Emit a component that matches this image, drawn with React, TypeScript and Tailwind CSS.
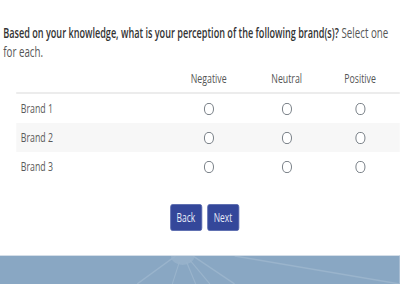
import React from "react";

const brands = ["Brand 1", "Brand 2", "Brand 3"];
const options = ["Negative", "Neutral", "Positive"];

const Radio = () => (
  <span className="block w-[15px] h-[12px] rounded-full border-[1.5px] border-[#5f6770] bg-white" />
);

const FooterArt = () => (
  <svg className="absolute inset-0 w-full h-full" viewBox="0 0 615 28" preserveAspectRatio="none">
    <ellipse cx="281" cy="0" rx="18" ry="9" fill="#96b1ca" />
    <g stroke="#9ab4cc" strokeWidth="1.5">
      <line x1="270" y1="0" x2="211" y2="28" />
      <line x1="276" y1="6" x2="265" y2="28" />
      <line x1="287" y1="6" x2="301" y2="28" />
      <line x1="292" y1="4" x2="323" y2="28" />
      <line x1="297" y1="0" x2="361" y2="28" />
      <line x1="361" y1="0" x2="615" y2="28" />
    </g>
  </svg>
);

export default function App() {
  return (
    <div className="w-[400px] h-[284px] overflow-hidden bg-white" style={{ fontFamily: '"Open Sans", "Noto Sans", sans-serif' }}>
      <div className="w-[615px] h-[284px] origin-top-left scale-x-65 flex flex-col">
        {/* Question */}
        <p className="pt-[23px] pl-[5px] pr-[2px] leading-[18px] text-[#333]">
          <span className="font-semibold text-[14px]">
            Based on your knowledge, what is your perception of the following brand(s)?
          </span>{" "}
          <span className="text-[#555] text-[15px]">Select one for each.</span>
        </p>

        {/* Grid */}
        <div className="ml-[25px] mt-[4px] text-[13.5px] text-[#555]">
          <div className="grid grid-cols-[236px_120px_120px_106px] h-[30px] items-center border-b-2 border-[#ececec]">
            <span />
            {options.map((o) => (
              <span key={o} className="text-center">{o}</span>
            ))}
          </div>
          {brands.map((b, i) => (
            <div
              key={b}
              className={`grid grid-cols-[236px_120px_120px_106px] h-[29px] items-center ${
                i === 1 ? "bg-[#f7f7f7]" : "bg-white"
              }`}
            >
              <span className="pl-[7px] text-[#5a5a5a]">{b}</span>
              {options.map((o) => (
                <span key={o} className="flex justify-center">
                  <Radio />
                </span>
              ))}
            </div>
          ))}
        </div>

        {/* Nav buttons */}
        <div className="flex justify-center gap-[8px] pl-[14px] mt-[23px]">
          <button className="w-[49px] h-[27px] rounded-[3px] bg-[#34479a] text-[#e8ecf8] text-[13px] border border-[#5566ad]">
            Back
          </button>
          <button className="w-[49px] h-[27px] rounded-[3px] bg-[#34479a] text-[#e8ecf8] text-[13px] border border-[#5566ad]">
            Next
          </button>
        </div>

        {/* Footer */}
        <div className="mt-auto h-[29px] relative bg-[#89a7c3] border-t-[1px] border-[#d4dee8]">
          <FooterArt />
        </div>
      </div>
    </div>
  );
}
